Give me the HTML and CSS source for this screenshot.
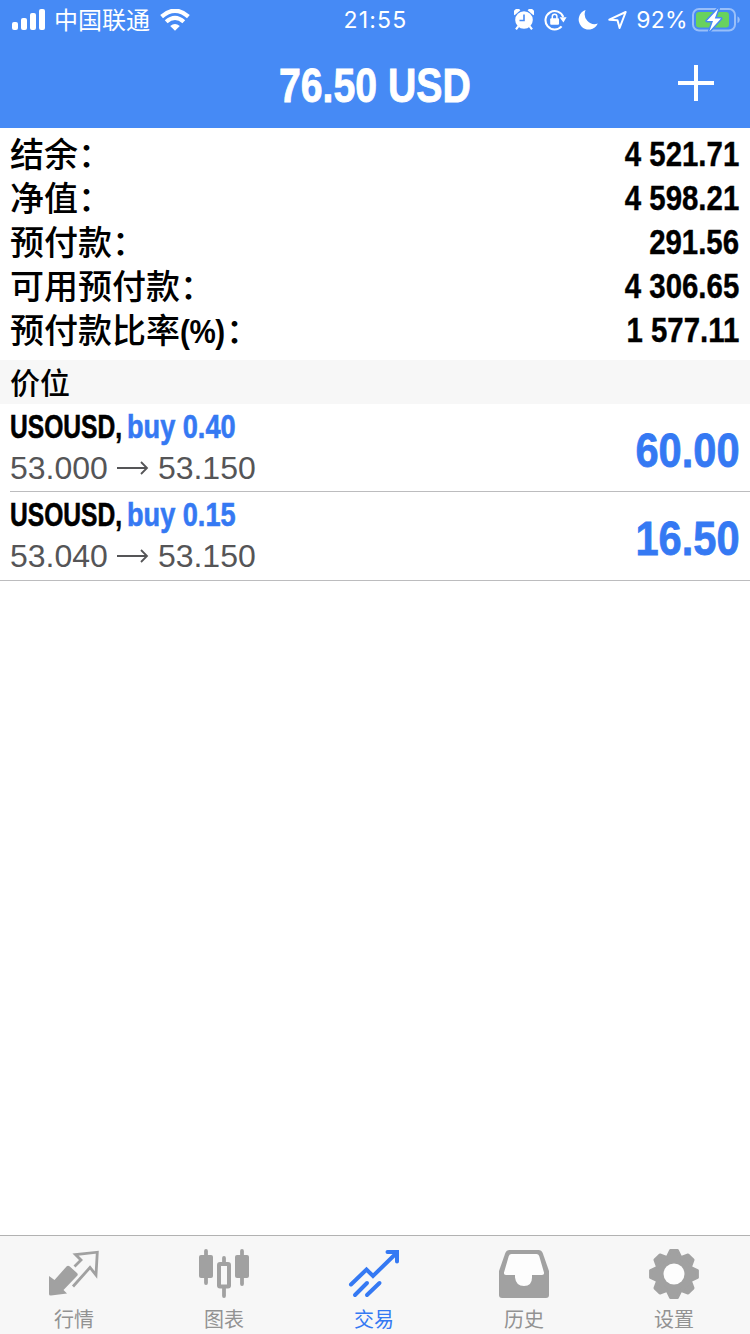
FILE: index.html
```html
<!DOCTYPE html>
<html lang="zh-CN">
<head>
<meta charset="utf-8">
<title>交易</title>
<link rel="stylesheet" href="styles.css">
</head>
<body>
<div class="app">
  <header class="top">
    <div class="status">
      <div class="status-left">
        <svg class="signal" width="34" height="22" viewBox="0 0 34 22" fill="#fff"><rect x="0" y="13" width="6" height="8" rx="2"/><rect x="9" y="9" width="6" height="12" rx="2"/><rect x="18" y="4" width="6" height="17" rx="2"/><rect x="27" y="0" width="6" height="21" rx="2"/></svg>
        <span class="carrier">中国联通</span>
        <svg class="wifi" width="30" height="22" viewBox="0 0 30 22" fill="none" stroke="#fff" stroke-width="4.2"><path d="M1.6 7.6Q15-4.2 28.4 7.6"/><path d="M6.2 12.8Q15 5 23.8 12.8"/><path d="M10.2 17Q15 12.8 19.8 17L15 21.8Z" fill="#fff" stroke="none"/></svg>
      </div>
      <div class="clock">21:55</div>
      <div class="status-right">
        <svg class="s-icon alarm" width="20" height="22" viewBox="0 0 20 22"><g fill="#fff"><path d="M.6 6.2A3.7 3.7 0 0 1 6.4 1.2ZM19.4 6.2A3.7 3.7 0 0 0 13.6 1.2Z"/><circle cx="10" cy="11" r="8.8"/></g><path d="M4.2 17.4 2 20.4M15.8 17.4l2.2 3" stroke="#fff" stroke-width="2.2"/><path d="M10 5.5V11.5H5.5" fill="none" stroke="#468af5" stroke-width="1.6"/></svg>
        <svg class="s-icon lock" width="23" height="22" viewBox="0 0 23 22"><path d="M17.6 17.4A9.2 9.2 0 1 1 19.3 8" fill="none" stroke="#fff" stroke-width="2.1"/><path d="M15.6 8.2H22.6L19.4 13.4Z" fill="#fff"/><rect x="6.2" y="9.2" width="8.8" height="6.6" rx="1" fill="#fff"/><path d="M8.3 10V7.6a2.3 2.3 0 0 1 4.6 0V10" fill="none" stroke="#fff" stroke-width="1.5"/></svg>
        <svg class="s-icon moon" width="20" height="22" viewBox="0 0 20 22"><path d="M7.6 1A10 10 0 1 0 19.8 14.6 10 10 0 0 1 7.6 1Z" fill="#fff"/></svg>
        <svg class="s-icon nav-arrow" width="19" height="20" viewBox="0 0 19 20"><path d="M1.3 9.7 17.7 2 11.6 18 9.5 10.3Z" fill="none" stroke="#fff" stroke-width="2" stroke-linejoin="round"/></svg>
        <span class="percent">92%</span>
        <svg class="battery" width="48" height="24" viewBox="0 0 48 24"><rect x="1" y="1" width="42" height="21.5" rx="6" fill="none" stroke="#fff" stroke-opacity=".45" stroke-width="2"/><path d="M45.5 8.3q2.3 1.2 2.3 3.5t-2.3 3.5Z" fill="#fff" fill-opacity=".45"/><rect x="4" y="4" width="33" height="15.5" rx="3" fill="#68d25e"/><path d="M26.4.4 14.8 13h6.2l-3.6 10.2L29 10.6h-6.2Z" fill="#fff" stroke="#468af5" stroke-width="3" paint-order="stroke" stroke-linejoin="round"/></svg>
      </div>
    </div>
    <div class="titlebar">
      <h1 class="title"><span class="cond">76.50 USD</span></h1>
      <svg class="plus" width="36" height="36" viewBox="0 0 36 36"><path d="M0 18H36M18 0V36" stroke="#fff" stroke-width="4"/></svg>
    </div>
  </header>
  <section class="summary">
    <div class="sum-row"><span class="label">结余：</span><span class="value">4 521.71</span></div>
    <div class="sum-row"><span class="label">净值：</span><span class="value">4 598.21</span></div>
    <div class="sum-row"><span class="label">预付款：</span><span class="value">291.56</span></div>
    <div class="sum-row"><span class="label">可用预付款：</span><span class="value">4 306.65</span></div>
    <div class="sum-row"><span class="label">预付款比率<span class="paren">(%)</span>：</span><span class="value">1 577.11</span></div>
  </section>
  <h2 class="section-title">价位</h2>
  <section class="positions">
    <div class="position">
      <div class="details">
        <div class="order"><span class="symbol">USOUSD,</span><span class="side">buy 0.40</span></div>
        <div class="prices"><span>53.000</span><svg width="32" height="16" viewBox="0 0 32 16"><path d="M0 8H30M24 2l6 6-6 6" fill="none" stroke="#555557" stroke-width="1.8"/></svg><span>53.150</span></div>
      </div>
      <div class="profit">60.00</div>
    </div>
    <div class="position">
      <div class="details">
        <div class="order"><span class="symbol">USOUSD,</span><span class="side">buy 0.15</span></div>
        <div class="prices"><span>53.040</span><svg width="32" height="16" viewBox="0 0 32 16"><path d="M0 8H30M24 2l6 6-6 6" fill="none" stroke="#555557" stroke-width="1.8"/></svg><span>53.150</span></div>
      </div>
      <div class="profit">16.50</div>
    </div>
  </section>
  <nav class="tabs">
    <div class="tab">
      <svg width="52" height="52" viewBox="0 0 52 52"><path d="M1 27 6.5 31 18.5 17.5Q20 16 21.5 17.3L29 24Q30.4 25.3 29.2 26.8L15.5 41 19 44.5 3 46.6Q1 46.8 1 45Z" fill="#a1a1a1"/><path d="M26.5 17.5 33 11 27.5 5.5 49.3 3.2 48 26 42 18.5 25 37.5" fill="none" stroke="#a1a1a1" stroke-width="2.8"/></svg>
      <span>行情</span>
    </div>
    <div class="tab">
      <svg width="52" height="52" viewBox="0 0 52 52" fill="#a1a1a1"><rect x="6.1" y="0" width="3.8" height="36" rx="1.9"/><rect x="1" y="6" width="14" height="23" rx="2"/><rect x="42.1" y="0" width="3.8" height="37" rx="1.9"/><rect x="37" y="6" width="14" height="23" rx="2"/><rect x="24.1" y="7" width="3.8" height="8" rx="1.9"/><rect x="24.1" y="36" width="3.8" height="13" rx="1.9"/><rect x="21" y="15" width="10" height="22.5" rx="1" fill="none" stroke="#a1a1a1" stroke-width="4"/></svg>
      <span>图表</span>
    </div>
    <div class="tab active">
      <svg width="52" height="52" viewBox="0 0 52 52" fill="none" stroke="#3579f3" stroke-width="4" stroke-linecap="round" stroke-linejoin="miter"><path d="M3 35.5 18.5 20.5 25 27 48 4.5"/><path d="M39.5 3H49V12.5" stroke-width="4"/><path d="M7 46 19 34M19 46 31.5 34"/></svg>
      <span>交易</span>
    </div>
    <div class="tab">
      <svg width="52" height="52" viewBox="0 0 52 52"><path d="M11.5 1H40.5Q43.5 1 44.7 4L51 22V46Q51 49 48 49H4Q1 49 1 46V22L7.3 4Q8.5 1 11.5 1Z" fill="#a1a1a1"/><path d="M13.5 5H38.5Q40.5 5 41.2 7L46 23.5Q46.5 26 44 26H34V28.5Q34 37 26 37T17 28.5V26H8Q5.5 26 6 23.5L10.8 7Q11.5 5 13.5 5Z" fill="#fdfdfd"/></svg>
      <span>历史</span>
    </div>
    <div class="tab">
      <svg width="52" height="52" viewBox="-26 -25 52 52"><g fill="#a1a1a1" stroke="#a1a1a1" stroke-width="3" stroke-linejoin="round"><circle r="18"/><path id="tooth" d="M-6.5-17-3.5-23.4H3.5L6.5-17Z"/><use href="#tooth" transform="rotate(45)"/><use href="#tooth" transform="rotate(90)"/><use href="#tooth" transform="rotate(135)"/><use href="#tooth" transform="rotate(180)"/><use href="#tooth" transform="rotate(225)"/><use href="#tooth" transform="rotate(270)"/><use href="#tooth" transform="rotate(315)"/></g><circle r="10.5" fill="#fdfdfd"/></svg>
      <span>设置</span>
    </div>
  </nav>
</div>
</body>
</html>
```
FILE: styles.css
```css
* { box-sizing: border-box; }
body {
  margin: 0;
  background: #fff;
  color: #000;
  font-family: "Liberation Sans", "Noto Sans CJK SC", sans-serif;
}
svg { display: block; flex: none; }
.app {
  width: 750px;
  height: 1334px;
  display: flex;
  flex-direction: column;
  overflow: hidden;
}

/* Header */
.top { height: 128px; background: #468af5; color: #fff; }
.status {
  height: 40px;
  display: grid;
  grid-template-columns: 1fr auto 1fr;
  align-items: center;
  padding: 0 10px 0 12px;
  font-family: Inter, "Noto Sans CJK SC", sans-serif;
}
.status-left, .status-right { display: flex; align-items: center; }
.status-right { justify-content: flex-end; }
.alarm, .lock, .moon { margin-top: -1px; }
.carrier { margin-left: 8px; padding-top: 2px; font-size: 24px; line-height: 38px; }
.wifi { margin-left: 10px; }
.clock { margin-right: 1px; font-size: 23px; letter-spacing: 1.2px; }
.lock { margin-left: 10px; }
.moon { margin-left: 11px; }
.nav-arrow { margin-left: 10px; }
.percent { margin: 0 4px 0 9px; font-size: 23px; letter-spacing: .3px; }
.titlebar {
  height: 88px;
  display: grid;
  grid-template-columns: 1fr auto 1fr;
  align-items: center;
  padding-right: 36px;
  padding-left: 36px;
}
.title {
  grid-column: 2;
  width: 192px;
  margin: 0;
  display: flex;
  justify-content: center;
  font-size: 49px;
  line-height: 88px;
  white-space: nowrap;
}
.cond { transform: translateY(1px) scaleX(.8); -webkit-text-stroke: .9px currentColor; }
.plus { justify-self: end; margin-bottom: 2px; }

/* Account summary */
.summary { height: 232px; padding: 3px 11px 0 10px; }
.sum-row {
  height: 44px;
  display: flex;
  justify-content: space-between;
  line-height: 44px;
  white-space: nowrap;
}
.label { font: 500 34px/44px "Noto Sans CJK SC", sans-serif; }
.paren {
  display: inline-block;
  width: 46px;
  font: 700 34px/40px "Liberation Sans", sans-serif;
  transform: scaleX(.87);
  transform-origin: left;
  letter-spacing: -.5px;
}
.value {
  font-size: 35px;
  font-weight: 700;
  line-height: 46px;
  transform: scaleX(.84);
  transform-origin: right;
  -webkit-text-stroke: .4px currentColor;
}

/* Open positions */
.section-title {
  height: 44px;
  margin: 0;
  padding-left: 10px;
  background: #f7f7f7;
  font: 500 30px/42px "Noto Sans CJK SC", sans-serif;
}
.positions { border-bottom: 1px solid #bcbcbe; }
.position {
  height: 88px;
  display: flex;
  justify-content: space-between;
  margin-left: 10px;
  padding-right: 10px;
  border-bottom: 1px solid #bcbcbe;
}
.position:last-child { border-bottom: 0; }
.order { display: flex; height: 46px; font-size: 33px; font-weight: 700; line-height: 45px; white-space: nowrap; -webkit-text-stroke: .6px currentColor; }
.symbol { width: 117px; transform: scaleX(.745); transform-origin: left; }
.side { color: #3579f3; transform: scaleX(.822); transform-origin: left; }
.prices { display: flex; align-items: center; gap: 9px; height: 36px; color: #555557; font-size: 32px; line-height: 36px; }
.profit {
  color: #3579f3;
  font-size: 49px;
  font-weight: 700;
  line-height: 92px;
  transform: scaleX(.85);
  transform-origin: right;
  -webkit-text-stroke: .8px currentColor;
}

/* Tab bar */
.tabs {
  height: 99px;
  margin-top: auto;
  display: grid;
  grid-template-columns: repeat(5, 1fr);
  border-top: 1px solid #b2b2b2;
  background: #f7f7f7;
  color: #929292;
}
.tab {
  display: flex;
  flex-direction: column;
  align-items: center;
  padding: 13px 2px 0 0;
  font: 400 20px/36px "Noto Sans CJK SC", sans-serif;
}
.tab.active { color: #3579f3; }
```
